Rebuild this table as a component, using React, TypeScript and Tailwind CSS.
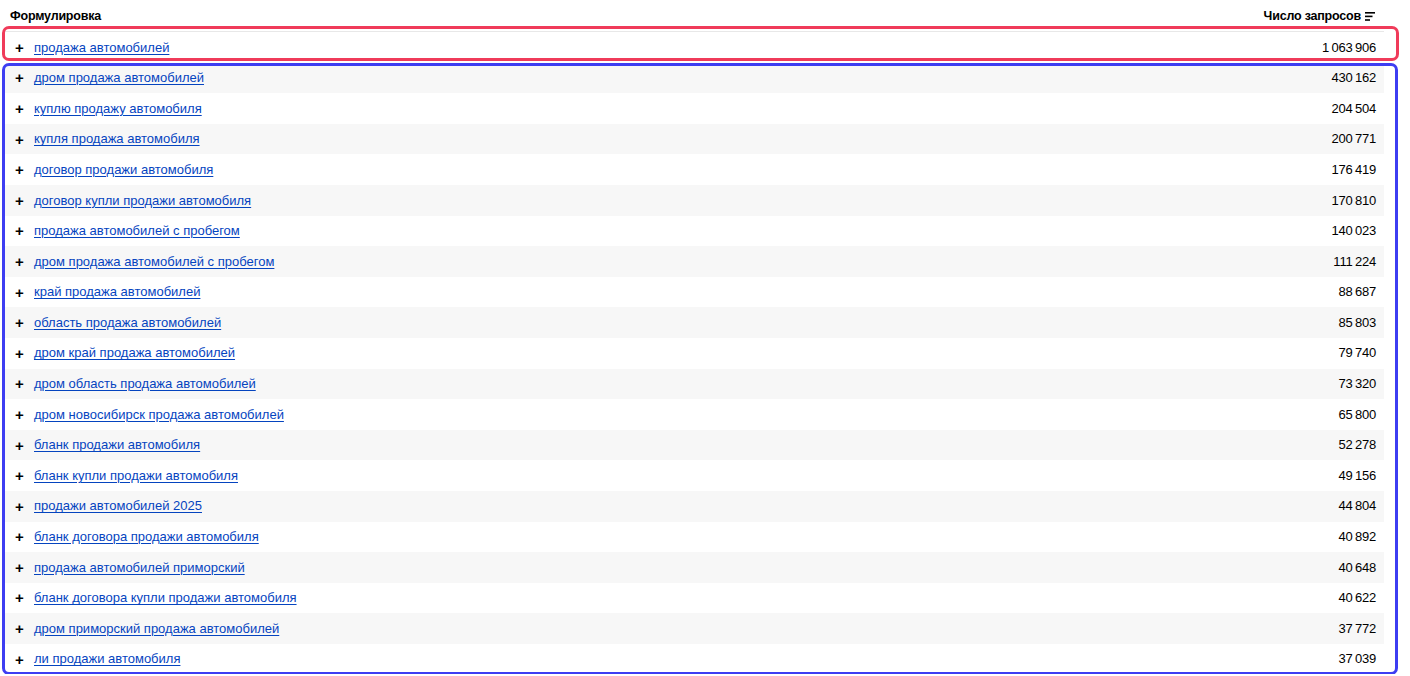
const rows: [string, string][] = [
    ["продажа автомобилей", "1 063 906"],
    ["дром продажа автомобилей", "430 162"],
    ["куплю продажу автомобиля", "204 504"],
    ["купля продажа автомобиля", "200 771"],
    ["договор продажи автомобиля", "176 419"],
    ["договор купли продажи автомобиля", "170 810"],
    ["продажа автомобилей с пробегом", "140 023"],
    ["дром продажа автомобилей с пробегом", "111 224"],
    ["край продажа автомобилей", "88 687"],
    ["область продажа автомобилей", "85 803"],
    ["дром край продажа автомобилей", "79 740"],
    ["дром область продажа автомобилей", "73 320"],
    ["дром новосибирск продажа автомобилей", "65 800"],
    ["бланк продажи автомобиля", "52 278"],
    ["бланк купли продажи автомобиля", "49 156"],
    ["продажи автомобилей 2025", "44 804"],
    ["бланк договора продажи автомобиля", "40 892"],
    ["продажа автомобилей приморский", "40 648"],
    ["бланк договора купли продажи автомобиля", "40 622"],
    ["дром приморский продажа автомобилей", "37 772"],
    ["ли продажи автомобиля", "37 039"],
];

function SortIcon() {
    return (
        <svg width="10" height="9" viewBox="0 0 10 9" className="ml-[4px]">
            <rect x="0" y="0" width="10" height="1.6" fill="#000" />
            <rect x="0" y="3.6" width="7.5" height="1.6" fill="#000" />
            <rect x="0" y="7.2" width="5" height="1.6" fill="#000" />
        </svg>
    );
}

export default function App() {
    return (
        <div className="relative w-full bg-white text-black pt-[1px] pl-[5px] pr-[26px] font-['Liberation_Sans',Arial,sans-serif]">
            <div className="flex items-center justify-between h-[31px] border-b border-[#e8e8e8] pl-[5px] pr-[9px] text-[12.5px] font-bold tracking-[-0.2px]">
                <span>Формулировка</span>
                <span className="flex items-center">
                    Число запросов
                    <SortIcon />
                </span>
            </div>
            {rows.map(([q, n], i) => (
                <div
                    key={q}
                    className={`flex items-center justify-between h-[30.6px] pl-[10px] pr-[8px] text-[13px] ${i % 2 === 1 ? "bg-[#f7f7f7]" : "bg-white"}`}
                >
                    <span className="flex items-center">
                        <span className="w-[19px] text-[15px] font-bold leading-none">+</span>
                        <a href="#" className="text-[#0544bf] underline underline-offset-2 decoration-[1px]">
                            {q}
                        </a>
                    </span>
                    <span className="tracking-[-0.2px]">{n.replace(/ /g, "\u2009")}</span>
                </div>
            ))}
            <div className="absolute left-[2px] top-[26px] w-[1397px] h-[35px] border-[3px] border-[#f03b5a] rounded-[7px] pointer-events-none" />
            <div className="absolute left-[2px] top-[63px] w-[1396px] h-[612px] border-[3px] border-[#3d3df2] rounded-[7px] pointer-events-none" />
        </div>
    );
}
